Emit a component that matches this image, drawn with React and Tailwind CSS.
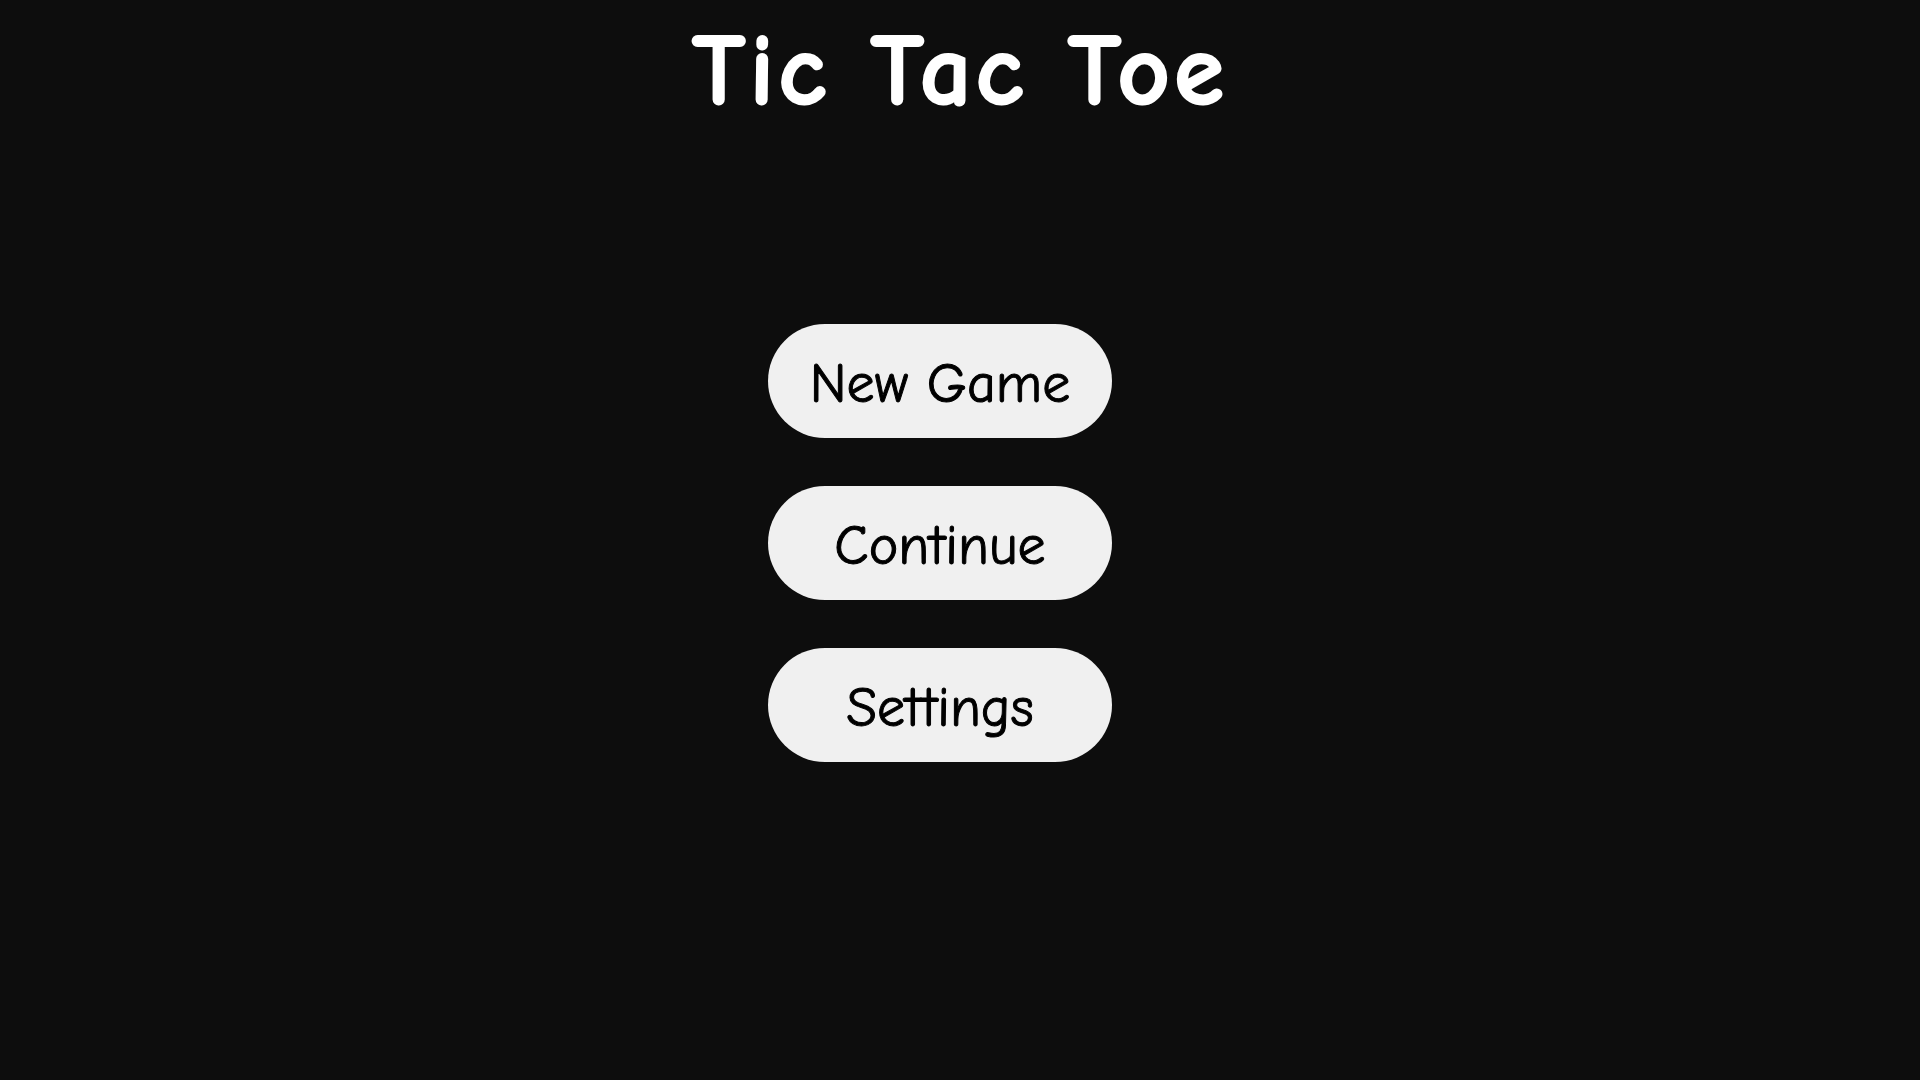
export default function App() {
  const font = { fontFamily: '"Comic Sans MS", "Comic Neue", "Chalkboard SE", Lato, sans-serif' };
  return (
    <div className="min-h-screen w-full bg-[#0d0d0d] flex flex-col items-center" style={font}>
      <h1 className="mt-[10px] text-[102px] leading-[1.2] font-bold text-white tracking-[4px] [-webkit-text-stroke:2px_white]">Tic Tac Toe</h1>
      <div className="mt-[192px] flex flex-col gap-[48px] pr-[40px]">
        {['New Game', 'Continue', 'Settings'].map((t) => (
          <button
            key={t}
            className="w-[344px] h-[114px] rounded-full bg-[#f0f0f0] text-black text-[56px] font-medium leading-none flex items-center justify-center pt-[6px] [-webkit-text-stroke:1px_black]"
          >
            {t}
          </button>
        ))}
      </div>
    </div>
  );
}
